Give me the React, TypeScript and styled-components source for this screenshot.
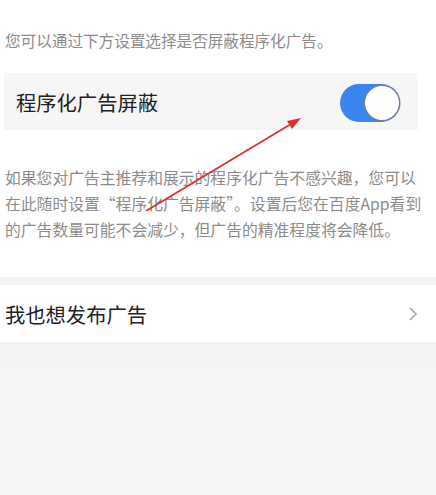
import React from "react";
import styled, { createGlobalStyle } from "styled-components";

const Global = createGlobalStyle`
  html, body { margin: 0; padding: 0; background: #f6f6f6; }
  body { font-family: "Noto Sans CJK SC", "Noto Sans", sans-serif; }
`;

const Page = styled.div`
  position: relative;
  width: 436px;
  min-height: 495px;
  background: #f6f6f6;
  overflow: hidden;
`;

const Top = styled.div`
  background: #ffffff;
  padding: 29px 0 34px 0;
`;

const Hint = styled.div`
  padding-left: 5px;
  font-size: 15.6px;
  line-height: 22px;
  color: #8c8c8c;
  white-space: nowrap;
`;

const Card = styled.div`
  margin: 22px 18px 0 4px;
  height: 57px;
  background: #f6f6f6;
  display: flex;
  align-items: center;
  justify-content: space-between;
  padding: 0 18px 0 12px;
`;

const Title = styled.span`
  font-size: 20.3px;
  color: #222222;
  white-space: nowrap;
`;

const Switch = styled.div`
  width: 60px;
  height: 38px;
  border-radius: 19px;
  background: #3a86f0;
  display: flex;
  align-items: center;
  justify-content: flex-end;
  padding: 0 1px;
  box-sizing: border-box;
  margin-top: 2px;
`;

const Knob = styled.div`
  width: 34px;
  height: 34px;
  border-radius: 50%;
  background: #ffffff;
  box-shadow: 0 0 0 1.5px #6d7f95;
`;

const Para = styled.div`
  margin-top: 35px;
  padding-left: 5px;
  font-size: 15.8px;
  line-height: 26px;
  color: #8c8c8c;
`;

const Line = styled.div`
  white-space: nowrap;
`;

const Gap = styled.div`
  height: 8px;
  background: #f3f3f3;
`;

const Row = styled.div`
  height: 57px;
  background: #ffffff;
  display: flex;
  align-items: center;
  justify-content: space-between;
  padding: 0 18px 0 5px;
`;

const Under = styled.div`
  height: 25px;
  background: #f3f3f3;
`;

const Arrow = styled.svg`
  position: absolute;
  left: 0;
  top: 0;
  pointer-events: none;
`;

export default function App() {
  return (
    <>
      <Global />
      <Page>
        <Top>
          <Hint>您可以通过下方设置选择是否屏蔽程序化广告。</Hint>
          <Card>
            <Title>程序化广告屏蔽</Title>
            <Switch>
              <Knob />
            </Switch>
          </Card>
          <Para>
            <Line>如果您对广告主推荐和展示的程序化广告不感兴趣，您可以</Line>
            <Line>在此随时设置“程序化广告屏蔽”。设置后您在百度App看到</Line>
            <Line>的广告数量可能不会减少，但广告的精准程度将会降低。</Line>
          </Para>
        </Top>
        <Gap />
        <Row>
          <Title>我也想发布广告</Title>
          <svg width="10" height="16" viewBox="0 0 10 16">
            <polyline points="2,2 8,8 2,14" fill="none" stroke="#a8a8a8" strokeWidth="1.6" />
          </svg>
        </Row>
        <Under />
        <Arrow width="436" height="495" viewBox="0 0 436 495">
          <line x1="146" y1="211" x2="296" y2="121" stroke="#e0302a" strokeWidth="1.8" />
          <polygon points="301,118 287,121 292,129" fill="#e0302a" />
        </Arrow>
      </Page>
    </>
  );
}
